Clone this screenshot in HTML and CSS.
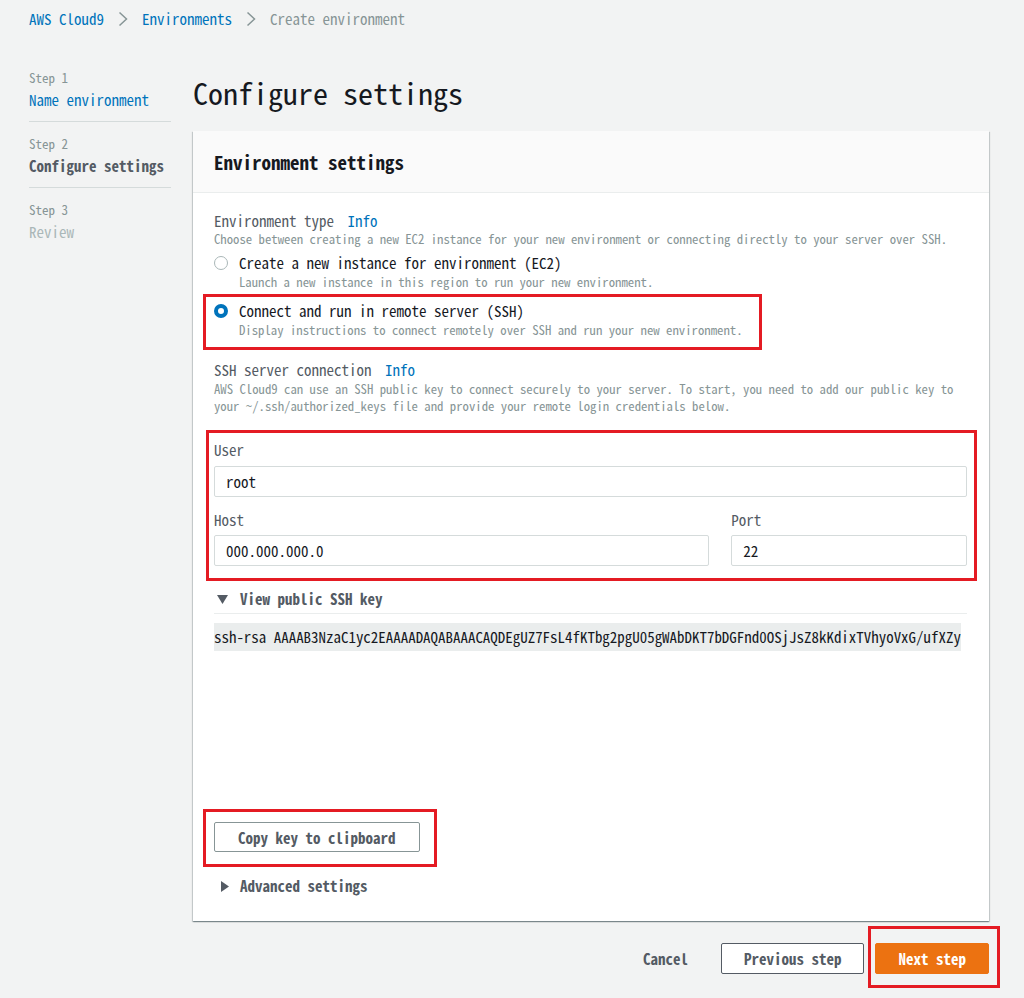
FILE: index.html
```html
<!DOCTYPE html>
<html lang="en">
<head>
<meta charset="utf-8">
<title>Create environment</title>
<link rel="stylesheet" href="styles.css">
</head>
<body>
<nav class="crumbs">
  <a class="crumb-link">AWS Cloud9</a>
  <svg class="chev" width="10" height="16" viewBox="0 0 10 16"><polyline points="1.5,1.5 8.5,8 1.5,14.5" fill="none" stroke="#879596" stroke-width="1.5"/></svg>
  <a class="crumb-link">Environments</a>
  <svg class="chev" width="10" height="16" viewBox="0 0 10 16"><polyline points="1.5,1.5 8.5,8 1.5,14.5" fill="none" stroke="#879596" stroke-width="1.5"/></svg>
  <span class="crumb-current">Create environment</span>
</nav>

<div class="layout">
  <aside class="steps">
    <div class="step">
      <div class="step-num">Step 1</div>
      <div class="step-name link">Name environment</div>
    </div>
    <div class="step">
      <div class="step-num">Step 2</div>
      <div class="step-name current">Configure settings</div>
    </div>
    <div class="step last">
      <div class="step-num">Step 3</div>
      <div class="step-name muted">Review</div>
    </div>
  </aside>

  <main class="main">
    <h1 class="title">Configure settings</h1>

    <section class="card">
      <header class="card-head">Environment settings</header>
      <div class="card-body">
        <div class="field-label">Environment type <span class="info">Info</span></div>
        <div class="desc">Choose between creating a new EC2 instance for your new environment or connecting directly to your server over SSH.</div>

        <div class="radio">
          <span class="dot"></span>
          <div>
            <div class="radio-label">Create a new instance for environment (EC2)</div>
            <div class="desc">Launch a new instance in this region to run your new environment.</div>
          </div>
        </div>

        <div class="mark mark-radio">
          <div class="radio">
            <span class="dot on"></span>
            <div>
              <div class="radio-label">Connect and run in remote server (SSH)</div>
              <div class="desc">Display instructions to connect remotely over SSH and run your new environment.</div>
            </div>
          </div>
        </div>

        <div class="field-label ssh-label">SSH server connection <span class="info">Info</span></div>
        <div class="desc tall">AWS Cloud9 can use an SSH public key to connect securely to your server. To start, you need to add our public key to your ~/.ssh/authorized_keys file and provide your remote login credentials below.</div>

        <div class="mark mark-form">
          <label class="input-label">User</label>
          <div class="input">root</div>
          <div class="host-row">
            <div>
              <label class="input-label">Host</label>
              <div class="input">000.000.000.0</div>
            </div>
            <div>
              <label class="input-label">Port</label>
              <div class="input">22</div>
            </div>
          </div>
        </div>

        <div class="expander">
          <svg class="tri-down" width="11" height="9" viewBox="0 0 11 9"><polygon points="0,0 11,0 5.5,9" fill="#545b64"/></svg>
          <span>View public SSH key</span>
        </div>
        <div class="rule"></div>
        <div class="key"><code>ssh-rsa AAAAB3NzaC1yc2EAAAADAQABAAACAQDEgUZ7FsL4fKTbg2pgU05gWAbDKT7bDGFnd0OSjJsZ8kKdixTVhyoVxG/ufXZy</code></div>

        <div class="mark mark-copy">
          <button class="btn">Copy key to clipboard</button>
        </div>

        <div class="expander adv">
          <svg class="tri-right" width="8" height="11" viewBox="0 0 8 11"><polygon points="0,0 8,5.5 0,11" fill="#545b64"/></svg>
          <span>Advanced settings</span>
        </div>
      </div>
    </section>

    <footer class="actions">
      <button class="btn-plain">Cancel</button>
      <button class="btn">Previous step</button>
      <div class="mark-next">
        <button class="btn btn-primary">Next step</button>
        <span class="mark-next-frame"></span>
      </div>
    </footer>
  </main>
</div>
</body>
</html>
```
FILE: styles.css
```css
* { box-sizing: border-box; }

html, body { height: 998px; overflow: hidden; }

body {
  margin: 0;
  background: #f2f3f3;
  color: #16191f;
  font-family: "Noto Sans Mono CJK JP", "DejaVu Sans Mono", monospace;
  font-size: 15px;
}

.crumbs {
  display: flex;
  align-items: center;
  gap: 14px;
  padding: 9px 0 0 29px;
  height: 29px;
  line-height: 20px;
  font-size: 15px;
}
.crumb-link { color: #0073bb; }
.crumb-current { color: #879596; }
.chev { display: block; }

.layout {
  display: flex;
  gap: 22px;
  padding: 27px 0 0 29px;
}

.steps { width: 142px; flex: none; }
.step {
  padding: 13px 0 10px;
  border-bottom: 1px solid #d5dbdb;
}
.step.last { border-bottom: none; }
.step-num { font-size: 13px; line-height: 18px; color: #879596; }
.step-name { font-size: 15px; line-height: 22px; margin-top: 2px; }
.step-name.link { color: #0073bb; }
.step-name.current { color: #545b64; font-weight: bold; }
.step-name.muted { color: #aab7b8; }

.main { width: 796px; flex: none; }

.title {
  margin: 18px 0 21px;
  font-size: 30px;
  line-height: 36px;
  font-weight: normal;
  color: #16191f;
}

.card {
  background: #fff;
  box-shadow: 0 1px 1px 0 rgba(0, 28, 36, 0.3), 1px 1px 1px 0 rgba(0, 28, 36, 0.15), -1px 1px 1px 0 rgba(0, 28, 36, 0.15);
}
.card-head {
  background: #fafafa;
  border-bottom: 1px solid #eaeded;
  padding: 19px 21px 18px;
  font-size: 19px;
  line-height: 24px;
  font-weight: bold;
  color: #16191f;
}
.card-body {
  padding: 18px 22px 25px 21px;
}

.field-label {
  font-size: 15px;
  line-height: 20px;
  color: #545b64;
}
.info { color: #0073bb; margin-left: 6px; }
.desc {
  font-size: 12.75px;
  line-height: 16px;
  color: #879596;
}
.desc.tall { line-height: 17px; }

.radio {
  display: flex;
  gap: 11px;
  margin-top: 5px;
}
.radio-label { font-size: 15px; line-height: 22px; color: #16191f; }
.dot {
  flex: none;
  width: 14px;
  height: 14px;
  margin-top: 4px;
  border-radius: 50%;
  border: 1px solid #aab7b8;
  background: #fff;
}
.dot.on {
  border: 4px solid #0073bb;
  background: #fff;
}

.mark { border: 3px solid #e41b23; }
.mark-radio {
  display: inline-block;
  margin: 4px 0 0 -11px;
  padding: 0 16px 9px 8px;
}
.mark-radio .radio { margin-top: 3px; }

.ssh-label { margin-top: 10px; }

.mark-form {
  margin: 16px -10px 0 -8px;
  padding: 7px 7px 12px 5px;
}
.input-label {
  display: block;
  font-size: 15px;
  line-height: 20px;
  color: #545b64;
}
.input {
  margin-top: 6px;
  height: 31px;
  padding: 0 11px;
  border: 1px solid #d5dbdb;
  border-radius: 2px;
  font-size: 15px;
  line-height: 29px;
  color: #16191f;
  background: #fff;
}
.host-row {
  display: grid;
  grid-template-columns: 2.1fr 1fr;
  gap: 22px;
  margin-top: 13px;
}
.host-row .input { margin-top: 5px; }

.expander {
  display: flex;
  align-items: center;
  margin-top: 8px;
  font-size: 15px;
  line-height: 20px;
  font-weight: bold;
  color: #545b64;
}
.tri-down { margin: 0 12px 0 3px; }
.tri-right { margin: 0 11px 0 7px; }
.rule {
  margin-top: 4px;
  height: 1px;
  background: #eaeded;
}
.key {
  margin-top: 9px;
  display: inline-block;
  max-width: 100%;
  overflow: hidden;
  background: #eaeded;
  white-space: nowrap;
}
.key code {
  display: block;
  font-family: inherit;
  font-size: 14.95px;
  line-height: 28px;
  color: #16191f;
}

.mark-copy {
  display: inline-block;
  margin: 154px 0 0 -11px;
  padding: 10px 14px 12px 8px;
}

.btn {
  display: block;
  height: 31px;
  padding: 0 22px;
  border: 1px solid #545b64;
  border-radius: 2px;
  background: #fff;
  color: #545b64;
  font-family: inherit;
  font-size: 15px;
  font-weight: bold;
  line-height: 29px;
}
.mark-copy .btn { height: 30px; padding: 0 23px; border-color: #879596; }

.adv { margin-top: 9px; }

.actions {
  display: flex;
  justify-content: flex-end;
  align-items: center;
  gap: 11px;
  height: 31px;
  margin-top: 22px;
}
.btn-plain {
  border: none;
  background: none;
  padding: 0 22px;
  height: 31px;
  font-family: inherit;
  font-size: 15px;
  font-weight: bold;
  line-height: 31px;
  color: #545b64;
}
.mark-next {
  position: relative;
  height: 31px;
}
.mark-next-frame {
  position: absolute;
  top: -17px;
  left: -7px;
  width: 132px;
  height: 62px;
  border: 3px solid #e41b23;
  pointer-events: none;
}
.btn-primary {
  background: #ec7211;
  border-color: #ec7211;
  color: #fff;
  padding: 0 22px;
}
```
